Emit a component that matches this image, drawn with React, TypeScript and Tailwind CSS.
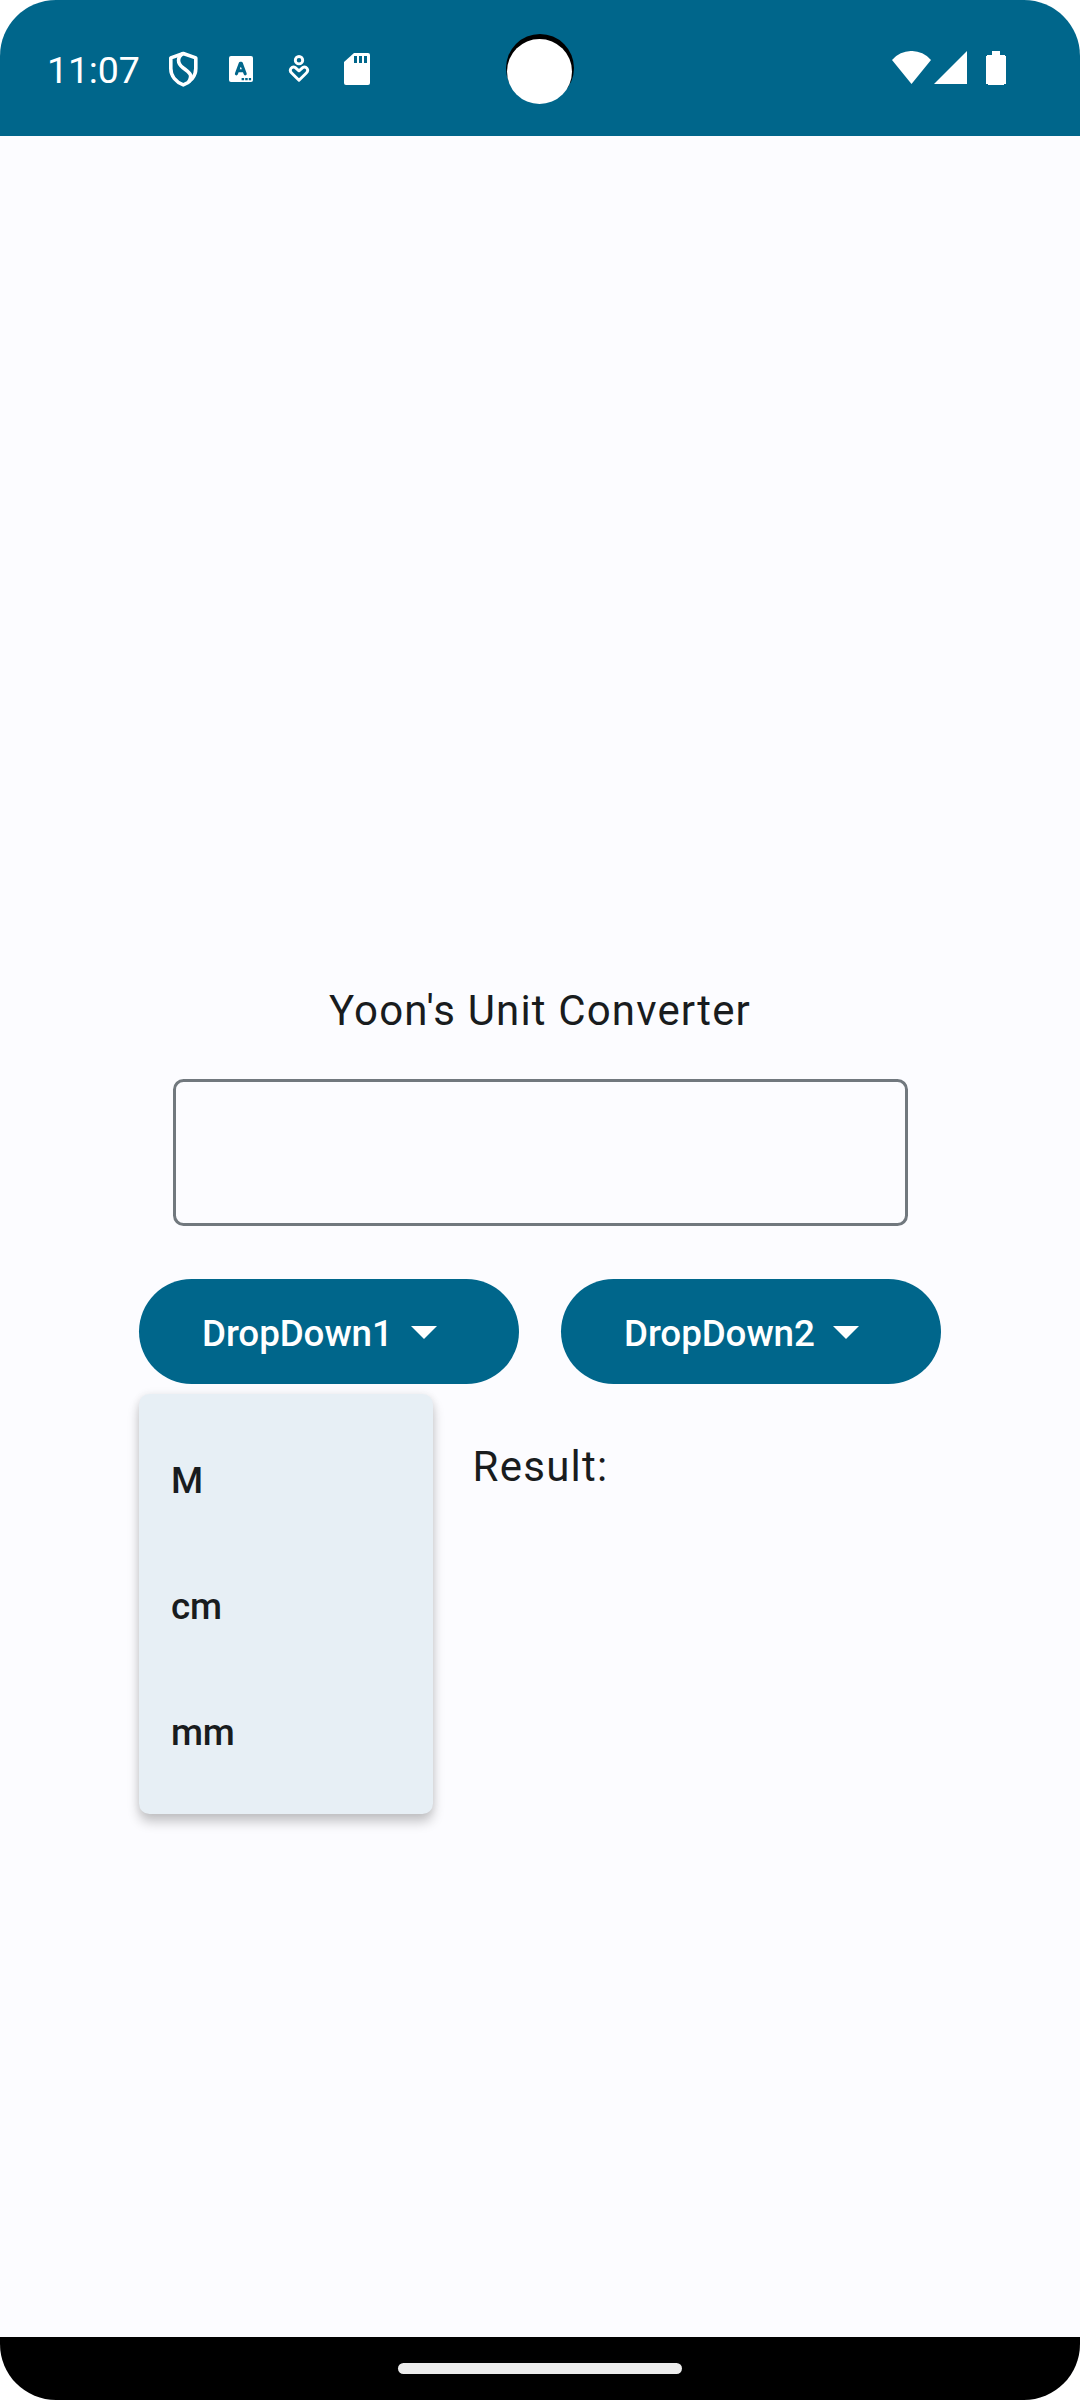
import React from "react";

function StatusBar() {
  return (
    <header className="relative flex h-[136px] w-full shrink-0 bg-[#00668b] text-white">
      <div className="flex h-[138px] items-center pl-[47px]">
        <span className="w-[110px] pt-[2px] text-[37.5px] leading-[44px] tracking-[-0.15px] whitespace-nowrap">11:07</span>
        <svg className="ml-[9px]" width="36" height="40" viewBox="0 0 36 40" fill="none">
          <path d="M17.3 4.5 L29.8 8.9 V19.5 C29.8 27.3 24.3 33.2 17.3 35.9 C10.3 33.2 4.8 27.3 4.8 19.5 V8.9 Z" stroke="white" strokeWidth="3.6" strokeLinejoin="round" />
          <path d="M17 4.5 C10.8 8.5 11.3 14.5 17 18.8 C25 24.5 26.5 26.5 22.7 33" stroke="white" strokeWidth="3.6" />
        </svg>
        <svg className="ml-[27px]" width="24" height="26" viewBox="0 0 24 26">
          <rect width="24" height="26" rx="2" fill="white" />
          <path d="M7.4 17.8 L11.3 7.4 H12.3 L16.2 17.8 M8.9 14.8 H14.7" fill="none" stroke="#00668b" strokeWidth="3.1" strokeLinecap="round" strokeLinejoin="round" />
          <path d="M12.6 22h2.5v2.2h-2.5zM16.2 22h2.5v2.2h-2.5zM19.8 22h2.3v2.2h-2.3z" fill="#00668b" />
        </svg>
        <svg className="ml-[35px]" width="22" height="30" viewBox="0 0 22 30" fill="none" stroke="white" strokeWidth="2.9">
          <circle cx="11" cy="6.2" r="3.7" />
          <path d="M11 26.3 L3.9 19.3 C.2 15.8 4 11.7 7.6 13.8 L11 16.8 L14.4 13.8 C18 11.7 21.8 15.8 18.1 19.3 Z" strokeLinejoin="round" />
        </svg>
        <svg className="ml-[34px]" width="26" height="32" viewBox="0 0 26 32">
          <path d="M10 0H24Q26 0 26 2V30Q26 32 24 32H2Q0 32 0 30V9Z" fill="white" />
          <path d="M10 3h3v7h-3zM15 3h3v7h-3zM20 3h3v7h-3z" fill="#00668b" />
        </svg>
      </div>
      <div className="absolute top-[34px] left-[506px] size-[68px] rounded-full bg-black">
        <div className="absolute top-[5px] left-[1px] size-[65px] rounded-full bg-white" />
      </div>
      <div className="ml-auto flex items-start pt-[51px] pr-[74px]">
        <svg width="39" height="33" viewBox="0 0 39 33" fill="white">
          <path d="M0 9A25.6 25.6 0 0 1 39 9L19.5 33Z" />
        </svg>
        <svg className="ml-[3px]" width="33" height="33" viewBox="0 0 33 33" fill="white">
          <path d="M33 0V33H0Z" />
        </svg>
        <svg className="ml-[19px]" width="20" height="34" viewBox="0 0 20 34" fill="white">
          <path d="M6 0H14V4H19V5H20V33H18V34H2V33H0V5H1V4H6Z" />
        </svg>
      </div>
    </header>
  );
}

function DropButton({ label, children }: { label: string; children?: React.ReactNode }) {
  return (
    <div className="relative">
      <button className="flex h-[105px] w-[380px] items-center rounded-full bg-[#00668b] pl-[63px] text-[36.75px] font-medium tracking-[-0.08px] text-white">
        <span className="w-[192px] pt-[3px] text-left whitespace-nowrap">{label}</span>
        <svg className="mt-[2px] ml-[17px]" width="26" height="13" viewBox="0 0 26 13" fill="white">
          <path d="M0 0H26L13 13Z" />
        </svg>
      </button>
      {children}
    </div>
  );
}

function UnitMenu() {
  return (
    <ul className="absolute top-[114.5px] left-0 w-[294px] rounded-[10.5px] bg-[#e7eff5] py-[21px] text-[36.75px] font-medium tracking-[-0.3px] text-[#191c1e] shadow-[0_8px_12px_rgba(0,0,0,0.22),0_0_8px_rgba(0,0,0,0.07)]">
      {["M", "cm", "mm"].map((unit) => (
        <li key={unit} className="flex h-[126px] items-center pt-[6px] pl-[32px]">
          {unit}
        </li>
      ))}
    </ul>
  );
}

export default function App() {
  return (
    <div className="h-[2400px] w-[1080px] bg-white font-[Roboto,sans-serif]">
      <div className="flex h-full w-full flex-col overflow-hidden rounded-[56px] bg-[#fcfcff]">
        <StatusBar />
        <main className="flex flex-1 flex-col items-center pt-[843px] text-[42px] leading-[63px] text-[#191c1e]">
          <h1 className="tracking-[1.15px]">Yoon's Unit Converter</h1>
          <input className="mt-[37px] h-[147px] w-[735px] rounded-[10.5px] border-[3px] border-[#71787e] bg-transparent px-[42px] outline-none" />
          <div className="mt-[53px] flex gap-[42px]">
            <DropButton label="DropDown1">
              <UnitMenu />
            </DropButton>
            <DropButton label="DropDown2" />
          </div>
          <p className="mt-[51px] pl-[1px] tracking-[1.25px]">Result:</p>
        </main>
        <footer className="flex h-[63px] shrink-0 justify-center bg-black pt-[26px]">
          <div className="h-[11px] w-[284px] rounded-full bg-[#ececec]" />
        </footer>
      </div>
    </div>
  );
}
